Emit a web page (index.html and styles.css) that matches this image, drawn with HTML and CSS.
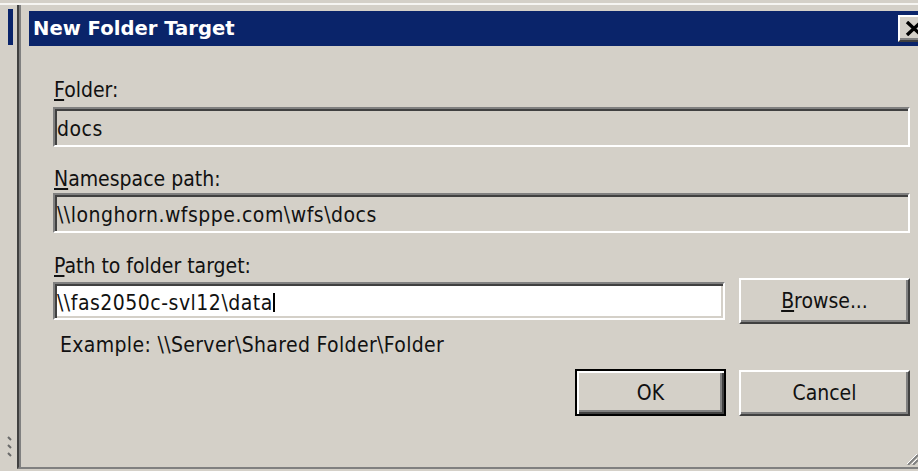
FILE: index.html
```html
<!DOCTYPE html>
<html lang="en">
<head>
<meta charset="utf-8">
<title>New Folder Target</title>
<link rel="stylesheet" href="styles.css">
</head>
<body>
<div class="screen">
  <div class="top-edge"></div>
  <div class="desk">
    <div class="behind">
      <div class="behind-title"></div>
      <svg class="behind-grip" width="6" height="26" viewBox="0 0 6 26">
        <path d="M1 2 L4 5 M1 10 L4 13 M1 18 L4 21" stroke="#6a6a6a" stroke-width="2" fill="none"/>
      </svg>
    </div>
    <div class="dialog">
      <div class="titlebar">
        <span class="title">New Folder Target</span>
        <button class="close" aria-label="Close">
          <svg width="18" height="15" viewBox="0 0 18 15">
            <path d="M2 1 L16 14 M16 1 L2 14" stroke="#000" stroke-width="3.4" fill="none"/>
          </svg>
        </button>
      </div>
      <div class="content">
        <label class="label label-folder"><u>F</u>older:</label>
        <div class="field readonly field-folder">docs</div>
        <label class="label label-ns"><u>N</u>amespace path:</label>
        <div class="field readonly field-ns">\\longhorn.wfsppe.com\wfs\docs</div>
        <label class="label label-path"><u>P</u>ath to folder target:</label>
        <div class="path-row">
          <div class="field edit">\\fas2050c-svl12\data<span class="caret"></span></div>
          <button class="btn browse"><u>B</u>rowse...</button>
        </div>
        <p class="example">Example: \\Server\Shared Folder\Folder</p>
        <div class="actions">
          <button class="btn default">OK</button>
          <button class="btn cancel">Cancel</button>
        </div>
        <div class="grip-row">
          <svg class="grip" width="14" height="14" viewBox="0 0 14 14">
            <path d="M4 14 L14 4 M9 14 L14 9" stroke="#808080" stroke-width="2" fill="none"/>
            <path d="M3 13 L13 3 M8 13 L13 8" stroke="#ffffff" stroke-width="1" fill="none"/>
          </svg>
        </div>
      </div>
    </div>
  </div>
</div>
</body>
</html>
```

FILE: styles.css
```css
html, body {
  margin: 0;
  padding: 0;
}

body {
  width: 918px;
  height: 471px;
  overflow: hidden;
  background: #d4d0c8;
  font-family: "DejaVu Sans Condensed", "DejaVu Sans", sans-serif;
  font-stretch: condensed;
  font-size: 21px;
  color: #111;
}

.screen {
  display: flex;
  flex-direction: column;
  height: 471px;
}

.top-edge {
  margin-top: 3px;
  height: 2px;
  background: #f6f5f2;
}

.desk {
  flex: 1;
  display: flex;
}

/* sliver of the window underneath */
.behind {
  width: 17px;
  display: flex;
  flex-direction: column;
}

.behind-title {
  margin: 4px 0 0 8px;
  width: 5px;
  height: 36px;
  background: #0a246a;
}

.behind-grip {
  margin: auto 0 10px 7px;
}

/* dialog window */
.dialog {
  flex: 1;
  display: flex;
  flex-direction: column;
  border-left: 2px solid #404040;
  border-bottom: 2px solid #808080;
  box-shadow: inset 2px 0 0 #808080;
  margin-bottom: 2px;
  padding: 6px 0 0 10px;
}

.titlebar {
  height: 35px;
  background: #0a246a;
  display: flex;
  align-items: center;
  justify-content: space-between;
  padding-left: 4px;
  overflow: hidden;
}

.title {
  color: #fff;
  font-family: "DejaVu Sans", sans-serif;
  font-stretch: normal;
  font-weight: bold;
  font-size: 19.6px;
  line-height: 24px;
  padding-top: 1px;
}

.close {
  flex: none;
  width: 32px;
  height: 27px;
  margin-right: -12px;
  padding: 0 0 0 5px;
  background: #d4d0c8;
  border: 2px solid;
  border-color: #fff #404040 #404040 #fff;
  box-shadow: inset -2px -2px 0 #808080;
  display: flex;
  align-items: center;
}

.content {
  flex: 1;
  display: flex;
  flex-direction: column;
  padding: 0 8px 0 24px;
}

.label {
  display: block;
  line-height: 24px;
  padding-left: 1px;
}

u {
  text-decoration-thickness: 2px;
  text-underline-offset: 2px;
}

.label-folder { margin-top: 32px; }
.label-ns { margin-top: 20px; }
.label-path { margin-top: 21px; }

.field {
  box-sizing: border-box;
  display: flex;
  align-items: center;
  padding: 3px 0 0 2px;
  border: 2px solid;
  border-color: #808080 #fff #fff #808080;
  box-shadow: inset 2px 2px 0 #404040, inset -2px -2px 0 #d4d0c8;
  white-space: pre;
  line-height: 24px;
  letter-spacing: 0.5px;
}

.readonly {
  height: 40px;
  background: #d4d0c8;
}

.field-folder { margin-top: 5px; }
.field-ns { margin-top: 2px; }

.path-row {
  display: flex;
  align-items: center;
  gap: 14px;
  height: 46px;
}

.edit {
  width: 672px;
  height: 38px;
  background: #fff;
}

.caret {
  display: inline-block;
  width: 2px;
  height: 19px;
  background: #000;
  margin-left: 0;
}

.btn {
  box-sizing: border-box;
  font: inherit;
  color: #111;
  background: #d4d0c8;
  border: 2px solid;
  border-color: #fff #404040 #404040 #fff;
  box-shadow: inset -2px -2px 0 #808080;
  padding: 0;
  line-height: 24px;
}

.browse {
  width: 171px;
  height: 46px;
}

.example {
  margin: 9px 0 0;
  line-height: 24px;
  padding-left: 7px;
  letter-spacing: 0.35px;
}

.actions {
  display: flex;
  justify-content: flex-end;
  align-items: flex-end;
  gap: 13px;
  margin-top: 12px;
}

.default {
  width: 151px;
  height: 47px;
  border: 2px solid #000;
  box-shadow: inset 2px 2px 0 #fff, inset -2px -2px 0 #404040, inset -4px -4px 0 #808080;
}

.cancel {
  width: 171px;
  height: 46px;
}

.grip-row {
  margin-top: auto;
  display: flex;
  justify-content: flex-end;
  margin-right: -8px;
  padding-bottom: 2px;
}
```
